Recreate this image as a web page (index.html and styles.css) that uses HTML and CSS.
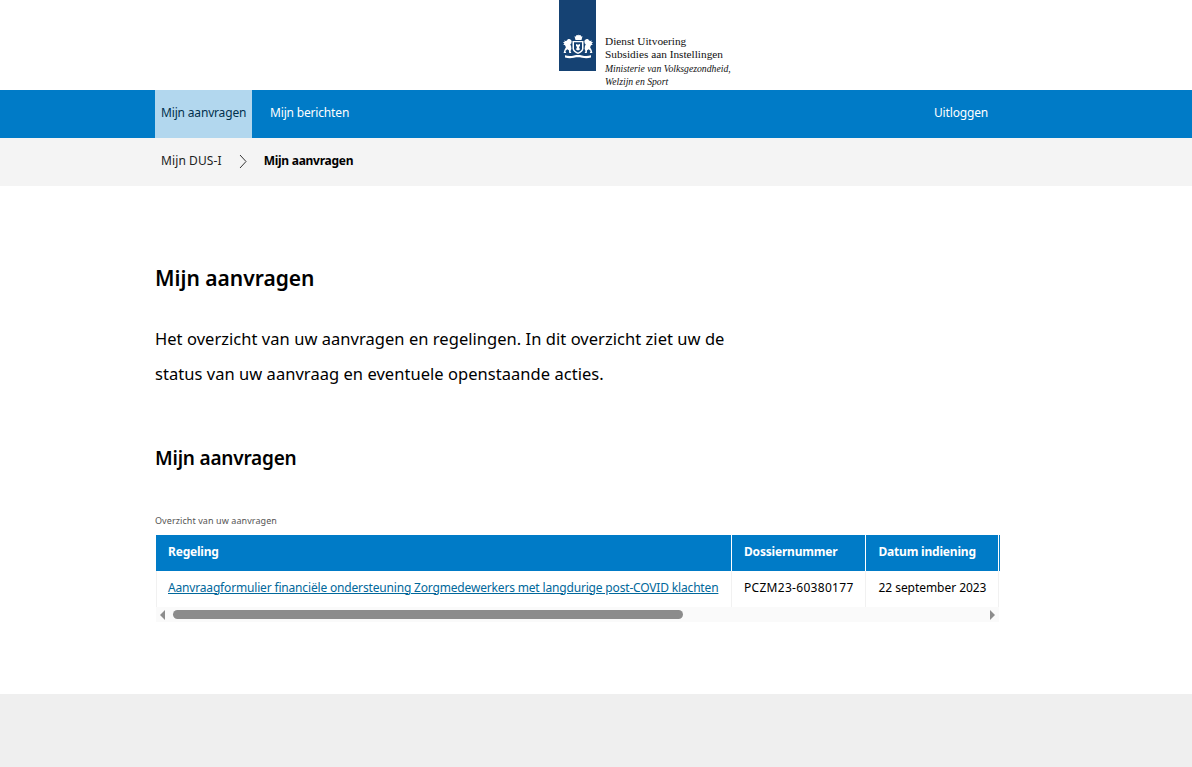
FILE: index.html
```html
<!DOCTYPE html>
<html lang="nl">
<head>
<meta charset="utf-8">
<title>Mijn aanvragen</title>
<link rel="stylesheet" href="styles.css">
</head>
<body>
<header class="brand">
  <div class="logo">
    <div class="ribbon">
      <svg class="crest" viewBox="0 0 32 25" width="32" height="25" aria-hidden="true">
        <g fill="#fff">
          <path d="M16 0l.7 1.300 1.800-.3.6 1.500 1.400-.2-1 3.700h-5l-1 0-1-3.700 1.400.2.600-1.500 1.800.3z"/>
          <path d="M10.500 7h11v7.500c0 2.500-2.500 4.300-5.500 5.500-3-1.200-5.500-3-5.500-5.500z"/>
          <g id="lion">
            <path d="M5 6.500c.6-1.500 2.600-1.800 3.700-.8l1 1.300-.4 2.500-1 .8.800 2 .3 2.500-.9 2.400.9 1.800H7.200l-.3-2.800-1.700-1-1.800 1.700.8 2.100H1.600l.8-3 1.500-2.700-.9-2-1.900-.8 1.300-.7L1 7.900l1.900.2L2 6.400l1.800.7z"/>
          </g>
          <use href="#lion" transform="matrix(-1 0 0 1 32 0)"/>
          <path d="M3 21.200c3 .9 6 .9 9 .2 2.700-.6 5.300-.6 8 0 3 .7 6 .7 9-.2v2.300c-3 .9-6 .9-9 .2-2.700-.6-5.300-.6-8 0-3 .7-6 .7-9-.2z"/>
        </g>
        <path d="M12 8.300h8v6.200c0 1.800-2 3.100-4 4-2-.9-4-2.200-4-4z" fill="#154273"/>
        <path d="M14 10l2 .8 2-.8v2l-1 1 1 2.500-2 1-2-1 1-2.500-1-1z" fill="#fff"/>
      </svg>
    </div>
    <div class="wordmark">
      <span>Dienst Uitvoering</span>
      <span>Subsidies aan Instellingen</span>
      <em>Ministerie van Volksgezondheid,</em>
      <em>Welzijn en Sport</em>
    </div>
  </div>
</header>
<nav class="mainnav">
  <div class="container navrow">
    <a class="navitem active" href="#">Mijn aanvragen</a>
    <a class="navitem" href="#">Mijn berichten</a>
    <a class="navitem logout" href="#">Uitloggen</a>
  </div>
</nav>
<div class="crumbs">
  <div class="container crumbrow">
    <a href="#">Mijn DUS-I</a>
    <svg class="chev" viewBox="0 0 8 15" width="8" height="15" aria-hidden="true"><path d="M1 1l6 6.500-6 6.500" fill="none" stroke="#333" stroke-width="1"/></svg>
    <strong>Mijn aanvragen</strong>
  </div>
</div>
<main class="container content">
  <h1>Mijn aanvragen</h1>
  <p class="intro">Het overzicht van uw aanvragen en regelingen. In dit overzicht ziet uw de status van uw aanvraag en eventuele openstaande acties.</p>
  <h2>Mijn aanvragen</h2>
  <div class="caption">Overzicht van uw aanvragen</div>
  <div class="tablewrap">
    <table>
      <thead>
        <tr><th class="c1">Regeling</th><th class="c2">Dossiernummer</th><th class="c3">Datum indiening</th><th class="c4"></th></tr>
      </thead>
      <tbody>
        <tr>
          <td class="first"><a href="#">Aanvraagformulier financiële ondersteuning Zorgmedewerkers met langdurige post-COVID klachten</a></td>
          <td class="num">PCZM23-60380177</td>
          <td class="date">22 september 2023</td>
          <td></td>
        </tr>
      </tbody>
    </table>
    <div class="scrollbar">
      <span class="arrow left"></span>
      <div class="track"><div class="thumb"></div></div>
      <span class="arrow right"></span>
    </div>
  </div>
</main>
<footer class="foot"></footer>
</body>
</html>
```
FILE: styles.css
```css
* { box-sizing: border-box; }
html, body { margin: 0; padding: 0; }
body {
  height: 767px;
  overflow: hidden;
  display: flex;
  flex-direction: column;
  background: #fff;
  color: #000;
  font-family: "Noto Sans", "Open Sans", sans-serif;
}
.container { width: 844px; margin-left: 155px; }
.brand { height: 90px; display: flex; justify-content: center; flex: none; }
.logo { display: flex; width: 74px; }
.ribbon {
  width: 37px; height: 71px; background: #154273; flex: none;
  display: flex; justify-content: center; align-items: flex-end; padding-bottom: 12px;
}
.wordmark {
  display: flex; flex-direction: column;
  margin: 35px 0 0 9px; font-family: "Liberation Serif", serif;
  font-size: 11.300px; line-height: 13.300px; white-space: nowrap; color: #111;
}
.wordmark em { font-size: 9.700px; }
.mainnav { height: 48px; background: #007bc7; flex: none; }
.navrow { display: flex; height: 48px; width: 839px; }
.navitem {
  display: flex; align-items: center; padding: 0 6px 4px; font-size: 12px;
  color: #fff; text-decoration: none; height: 48px; letter-spacing: -.17px; white-space: nowrap;
}
.navitem + .navitem { margin-left: 12px; }
.navitem.active { background: #b2d7ee; color: #01304d; width: 97px; }
.navitem.logout { margin-left: auto; }
.crumbs { height: 48px; background: #f4f4f4; flex: none; }
.crumbrow { display: flex; align-items: center; height: 48px; padding: 0 0 4px 6px; font-size: 12px; letter-spacing: -.2px; }
.crumbrow a { color: #222; text-decoration: none; letter-spacing: .1px; }
.chev { margin: 3px 0 0 17px; }
.crumbrow strong { margin-left: 17px; font-weight: 700; letter-spacing: -.27px; }
.content { flex: 1; padding-top: 77px; }
h1, h2 { margin: 0; font-size: 21px; line-height: 30px; font-weight: 600; }
.intro { margin: 28px 0 0; width: 590px; font-size: 16.500px; line-height: 35px; letter-spacing: .04px; }
h2 { margin-top: 52px; font-size: 19px; letter-spacing: -.2px; }
.caption { margin-top: 42px; font-size: 9px; line-height: 12px; color: #555; letter-spacing: .08px; }
.tablewrap { margin-top: 8px; width: 844px; padding-left: 1px; }
table { border-collapse: collapse; table-layout: fixed; width: 843px; font-size: 12px; }
th, td { padding: 0 0 4px 12px; text-align: left; white-space: nowrap; overflow: hidden; }
th {
  height: 36px; background: #007bc7; color: #fff; font-weight: 700;
  border-left: 1px solid #fff; letter-spacing: -.2px;
}
th.c1, td.first { padding-left: 11px; }
th.c3, td.date { padding-left: 12.500px; }
th:first-child { border-left-color: #007bc7; }
td { height: 36px; border-left: 1px solid #f1f1f1; letter-spacing: -.17px; }
.c1 { width: 575px; } .c2 { width: 134px; } .c3 { width: 133px; } .c4 { width: 1px; padding: 0; }
td a { color: #01689b; }
td.num { letter-spacing: .3px; }
td.date { letter-spacing: -.05px; }
.scrollbar { height: 15px; background: #fafafa; display: flex; align-items: center; }
.track { flex: 1; height: 9px; margin: 0 3px 0 8px; }
.thumb { width: 510px; height: 9px; border-radius: 5px; background: #8c8c8c; }
.arrow { width: 0; height: 0; border-top: 5px solid transparent; border-bottom: 5px solid transparent; flex: none; }
.arrow.left { margin-left: 4px; border-right: 5px solid #8c8c8c; }
.arrow.right { margin-right: 4px; border-left: 5px solid #8c8c8c; }
.foot { height: 73px; background: #efefef; flex: none; }
```
